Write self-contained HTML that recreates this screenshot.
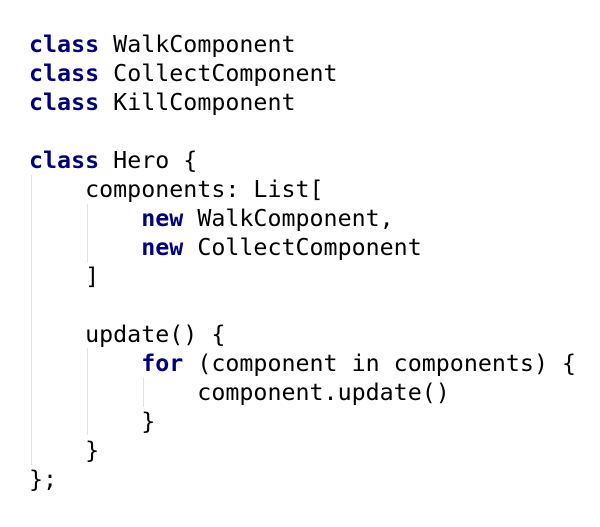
<!DOCTYPE html>
<html><head><style>
html,body{margin:0;padding:0;background:#fff;width:600px;height:527px;overflow:hidden;position:relative}
pre{position:absolute;left:29px;top:30px;margin:0;font-family:"DejaVu Sans Mono","Liberation Mono",monospace;font-size:23.3px;line-height:29px;color:#000}
b{color:#000080;font-weight:bold}
.g{position:absolute;width:1px;background:#e2e2e2}
</style></head><body>
<div class="g" style="left:31px;top:175px;height:290px"></div>
<div class="g" style="left:87px;top:204px;height:58px"></div>
<div class="g" style="left:87px;top:348px;height:87px"></div>
<div class="g" style="left:143px;top:378px;height:29px"></div>
<pre><b>class</b> WalkComponent
<b>class</b> CollectComponent
<b>class</b> KillComponent

<b>class</b> Hero {
    components: List[
        <b>new</b> WalkComponent,
        <b>new</b> CollectComponent
    ]

    update() {
        <b>for</b> (component in components) {
            component.update()
        }
    }
};</pre>
</body></html>
